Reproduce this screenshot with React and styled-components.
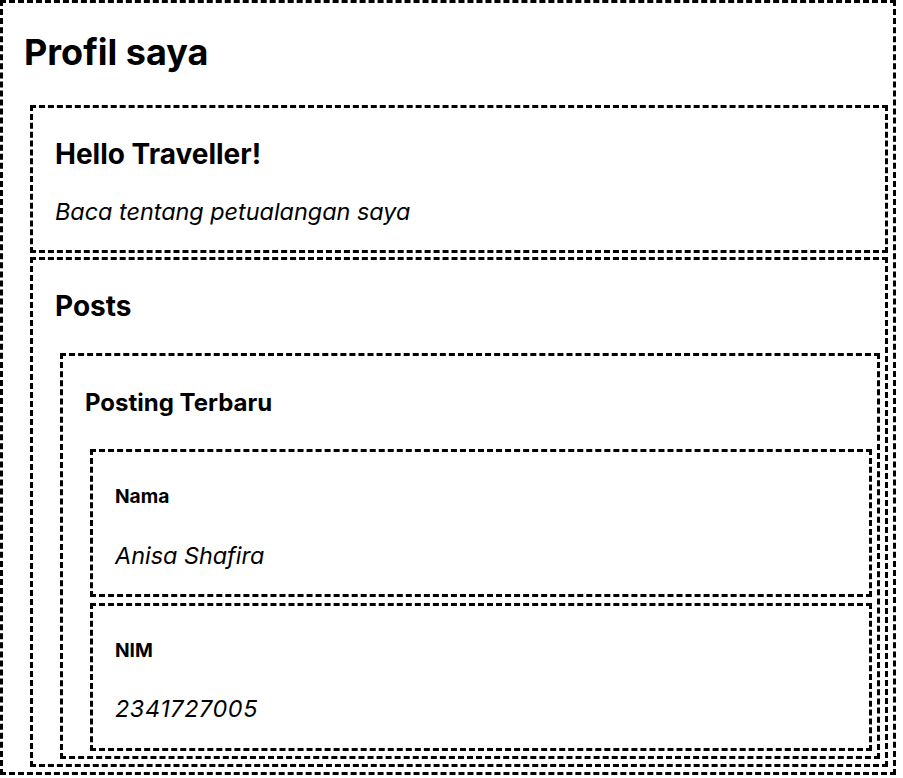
import React from 'react';
import styled, { createGlobalStyle } from 'styled-components';

const GlobalStyle = createGlobalStyle`
    body {
        margin: 0;
        background: #fff;
        color: #000;
        font-family: Inter, "Noto Sans", sans-serif;
    }
`;

// kotak putus-putus, dipakai berulang
const Panel = styled.div`
    border: 3px dashed #000;
    padding: 0 5px 5px 22px;
    margin: ${props => props.$gap || 0}px 0 0 ${props => (props.$root ? 0 : 5)}px;
    ${props => props.$root && 'margin-right: 7px;'}
`;

const PageTitle = styled.h1`
    font-size: 36px;
    font-weight: 700;
    line-height: 1;
    margin: 31px 0 35px -1px;
`;

const SectionTitle = styled.h2`
    font-size: 28px;
    font-weight: 700;
    line-height: 1;
    margin: 32px 0 33px;
`;

const SubTitle = styled.h3`
    font-size: 24px;
    font-weight: 700;
    line-height: 1;
    margin: 35px 0 34px;
`;

const Label = styled.h4`
    font-size: 19.2px;
    font-weight: 700;
    line-height: 1;
    margin: 35px 0 0;
`;

const Note = styled.p`
    font-size: 23.4px;
    font-style: italic;
    letter-spacing: ${props => (props.$spaced ? '0.6px' : 'normal')};
    line-height: 1;
    margin: ${props => props.$top}px 0 22px;
`;

const App = () => {
    return (
        <>
            <GlobalStyle />
            <Panel $root>
                <PageTitle>Profil saya</PageTitle>

                <Panel>
                    <SectionTitle>Hello Traveller!</SectionTitle>
                    <Note $top={-1}>Baca tentang petualangan saya</Note>
                </Panel>

                <Panel $gap={4}>
                    <SectionTitle>Posts</SectionTitle>
                    <Panel>
                        <SubTitle>Posting Terbaru</SubTitle>
                        <Panel>
                            <Label>Nama</Label>
                            <Note $top={37}>Anisa Shafira</Note>
                        </Panel>
                        <Panel $gap={6}>
                            <Label>NIM</Label>
                            <Note $top={37} $spaced>2341727005</Note>
                        </Panel>
                    </Panel>
                </Panel>
            </Panel>
        </>
    );
};

export default App;
